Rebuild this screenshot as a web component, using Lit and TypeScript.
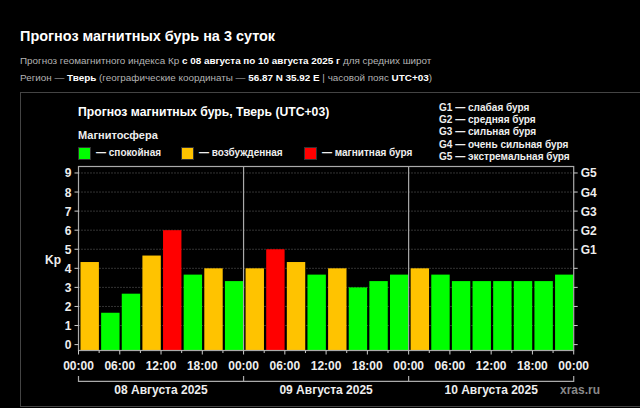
import { LitElement, css, html, svg } from "lit";
import { customElement } from "lit/decorators.js";

const GREEN = "#00ff00";
const ORANGE = "#ffc300";
const RED = "#ff0000";

// Kp values, one bar per 3 hours, three days of eight bars each
const KP = [
    4.33, 1.67, 2.67, 4.67, 6, 3.67, 4, 3.33,
    4, 5, 4.33, 3.67, 4, 3, 3.33, 3.67,
    4, 3.67, 3.33, 3.33, 3.33, 3.33, 3.33, 3.67
];
const DAYS = ["08 Августа 2025", "09 Августа 2025", "10 Августа 2025"];
const HOURS = ["00:00", "06:00", "12:00", "18:00"];

const LEFT = 49.5;
const RIGHT = 544.7;
const TOP = 6.5;
const BOTTOM = 190.5;
const ZERO = 184.6;
const UNIT = 19.07;
const STEP = (RIGHT - LEFT) / 24;

const yOf = (kp: number) => ZERO - kp * UNIT;
const barColor = (kp: number) => (kp >= 5 ? RED : kp >= 4 ? ORANGE : GREEN);

@customElement("app-root")
export class AppRoot extends LitElement {
    static styles = css`
        :host {
            display: block;
            height: 408px;
            overflow: hidden;
            background: #000;
            color: #fff;
            font-family: "Liberation Sans", Arial, sans-serif;
        }

        .page {
            padding: 27px 0 0 20px;
        }

        h1 {
            margin: 0;
            font-size: 14.45px;
            line-height: 19px;
            font-weight: bold;
        }

        p {
            margin: 0;
            font-size: 9.9px;
            line-height: 16.7px;
            color: #b4b4b4;
        }

        p b {
            color: #fff;
        }

        .intro {
            margin-top: 7px;
        }

        .frame {
            margin-top: 5.6px;
            height: 315px;
            border: 1px solid #444;
            border-right: 0;
            box-sizing: border-box;
            padding: 8px 0 0 57px;
            font-weight: bold;
        }

        .head {
            display: flex;
            height: 59px;
        }

        .titles {
            width: 361px;
        }

        .chart-title {
            font-size: 12.2px;
            line-height: 20px;
            margin-top: 1px;
        }

        .legend-title {
            font-size: 11px;
            line-height: 14px;
            margin-top: 6px;
            color: #eee;
        }

        .legend {
            display: flex;
            margin-top: 4px;
            font-size: 10px;
            line-height: 14px;
            color: #eee;
        }

        .legend span {
            display: flex;
            align-items: center;
            gap: 5px;
        }

        .legend .calm {
            width: 103px;
        }

        .legend .excited {
            width: 123px;
        }

        .swatch {
            box-sizing: border-box;
            width: 13px;
            height: 13px;
            border: 1px solid #333;
        }

        .scale {
            margin-top: 1px;
            font-size: 10.05px;
            line-height: 12.2px;
            color: #eee;
        }

        svg {
            display: block;
            margin-left: -49px;
        }

        text {
            fill: #eee;
            font-family: "Liberation Sans", Arial, sans-serif;
            font-weight: bold;
            font-size: 12px;
        }

        .axis {
            stroke: #aaa;
            stroke-width: 1.2;
            fill: none;
        }

        .tick {
            stroke: #ccc;
            stroke-width: 1;
        }

        .grid {
            stroke: #666;
            stroke-width: 1;
            stroke-dasharray: 1 2;
        }

        .mark {
            fill: #888;
        }
    `;

    private renderChart() {
        const end = KP.length;
        return html`
            <svg width="590" height="246" viewBox="0 0 590 246">
                ${[1, 2, 3, 4, 5, 6, 7, 8, 9].map(
                    (kp) => svg`<line class="grid" x1=${LEFT} x2=${RIGHT} y1=${yOf(kp)} y2=${yOf(kp)}></line>`
                )}
                ${KP.map((kp, i) => {
                    const y = yOf(kp);
                    return svg`<rect x=${LEFT + i * STEP + 2} y=${y} width="18.4" height=${BOTTOM - y}
                        fill=${barColor(kp)}></rect>`;
                })}
                <rect class="axis" x=${LEFT} y=${TOP} width=${RIGHT - LEFT} height=${BOTTOM - TOP}></rect>
                ${[8, 16].map(
                    (i) => svg`<line class="axis" x1=${LEFT + i * STEP} x2=${LEFT + i * STEP} y1=${TOP} y2=${BOTTOM}></line>`
                )}
                ${[0, 1, 2, 3, 4, 5, 6, 7, 8, 9].map(
                    (kp) => svg`
                        <line class="tick" x1=${LEFT - 4} x2=${LEFT} y1=${yOf(kp)} y2=${yOf(kp)}></line>
                        <line class="tick" x1=${RIGHT} x2=${RIGHT + 4} y1=${yOf(kp)} y2=${yOf(kp)}></line>
                        <text x=${LEFT - 7} y=${yOf(kp) + 4.5} text-anchor="end">${kp}</text>
                    `
                )}
                ${["G1", "G2", "G3", "G4", "G5"].map(
                    (g, i) => svg`<text x=${RIGHT + 7} y=${yOf(5 + i) + 4.5}>${g}</text>`
                )}
                <text x="16" y="103.5">Kp</text>
                ${Array.from({ length: end + 1 }, (_, i) => {
                    const x = LEFT + i * STEP;
                    const long = i % 2 === 0;
                    return svg`<line class="tick" x1=${x} x2=${x} y1=${BOTTOM} y2=${BOTTOM + (long ? 4 : 2.5)}></line>`;
                })}
                ${Array.from({ length: 13 }, (_, i) => {
                    const x = LEFT + i * 2 * STEP;
                    return svg`<text x=${x} y=${BOTTOM + 19} text-anchor="middle">${HOURS[i % 4]}</text>`;
                })}
                <path class="axis" d="M${LEFT} 216 V221.3 H${RIGHT} V216 M${LEFT + 8 * STEP} 216 V221.3 M${LEFT + 16 * STEP} 216 V221.3"></path>
                ${DAYS.map(
                    (day, i) => svg`<text x=${LEFT + (i * 8 + 4) * STEP} y="233.6" text-anchor="middle">${day}</text>`
                )}
                <text class="mark" x="551" y="234" text-anchor="middle">xras.ru</text>
            </svg>
        `;
    }

    protected render() {
        return html`
            <div class="page">
                <h1>Прогноз магнитных бурь на 3 суток</h1>
                <p class="intro">Прогноз геомагнитного индекса Кр <b>с 08 августа по 10 августа 2025 г</b> для средних широт</p>
                <p>Регион — <b>Тверь</b> (географические координаты — <b>56.87 N 35.92 E</b> | часовой пояс <b>UTC+03</b>)</p>
                <div class="frame">
                    <div class="head">
                        <div class="titles">
                            <div class="chart-title">Прогноз магнитных бурь, Тверь (UTC+03)</div>
                            <div class="legend-title">Магнитосфера</div>
                            <div class="legend">
                                <span class="calm"><i class="swatch" style="background:${GREEN}"></i>— спокойная</span>
                                <span class="excited"><i class="swatch" style="background:${ORANGE}"></i>— возбужденная</span>
                                <span><i class="swatch" style="background:${RED}"></i>— магнитная буря</span>
                            </div>
                        </div>
                        <div class="scale">
                            <div>G1 — слабая буря</div>
                            <div>G2 — средняя буря</div>
                            <div>G3 — сильная буря</div>
                            <div>G4 — очень сильная буря</div>
                            <div>G5 — экстремальная буря</div>
                        </div>
                    </div>
                    ${this.renderChart()}
                </div>
            </div>
        `;
    }
}
